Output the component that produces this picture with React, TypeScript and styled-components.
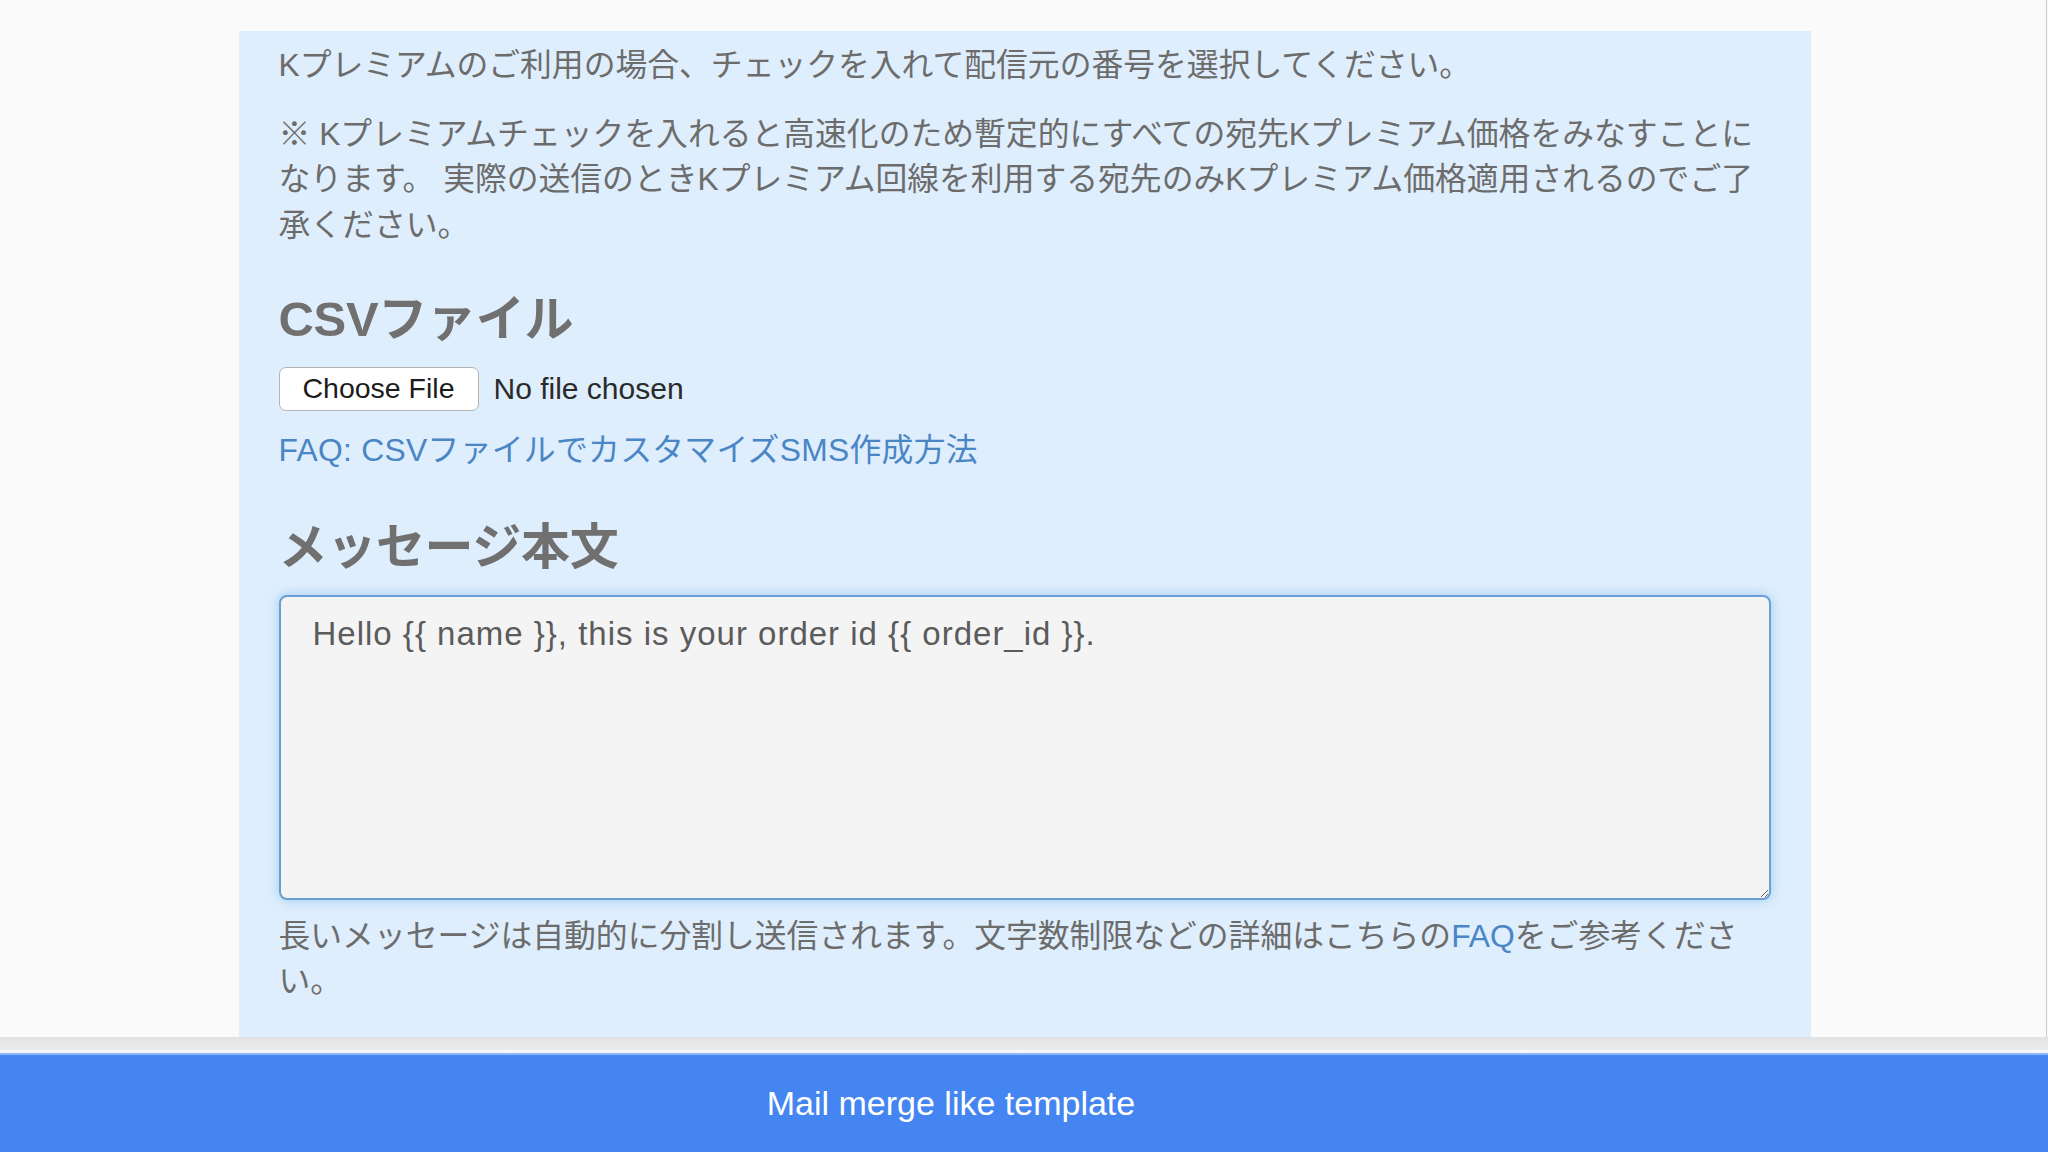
import styled, { createGlobalStyle } from 'styled-components';

const GlobalStyle = createGlobalStyle`
    html, body {
        margin: 0;
        padding: 0;
        background: #fafafa;
    }
    body {
        font-family: "Liberation Sans", "Noto Sans CJK JP", sans-serif;
        color: #6c6c6c;
    }
`

const Page = styled.div`
    height: 100vh;
    display: flex;
    flex-direction: column;
    overflow: hidden;
`

const Main = styled.main`
    flex: 1;
    min-height: 0;
    display: flex;
    flex-direction: column;
    align-items: center;
    padding: 31px 0 0 3px;
    margin-right: 1px;
    border-right: 1px solid #cbcbcb;
    overflow: hidden;
`

const Panel = styled.section`
    flex: 1;
    width: 1572px;
    box-sizing: border-box;
    padding: 12px 40px 0;
    background: #dfeefc;
`

const Text = styled.p`
    margin: 0 0 23px;
    font-size: 31.8px;
    line-height: 45.7px;
`

const Heading = styled.h3`
    margin: 44px 0 21px;
    font-size: 49px;
    line-height: 53px;
    font-weight: bold;
    color: #707070;
    letter-spacing: -0.3px;
`

const FileRow = styled.div`
    display: flex;
    align-items: center;
    gap: 15px;
    height: 44px;
`

const FileButton = styled.button`
    height: 44px;
    width: 200px;
    box-sizing: border-box;
    padding: 0;
    background: #ffffff;
    border: 1px solid #b4b4b4;
    border-radius: 7px;
    font-family: "Liberation Sans", sans-serif;
    font-size: 28.5px;
    color: #1c1c1c;
    cursor: pointer;
`

const FileStatus = styled.span`
    font-family: "Liberation Sans", sans-serif;
    font-size: 30px;
    color: #2a2a2a;
`

const Link = styled.a`
    color: #4a86c5;
    text-decoration: none;
`

const LinkLine = styled.div`
    margin: 17px 0 47px;
    font-size: 31.8px;
    line-height: 45.7px;
    letter-spacing: 0.3px;
`

const MessageBox = styled.textarea`
    display: block;
    width: 100%;
    height: 305px;
    box-sizing: border-box;
    margin: 0;
    padding: 14px 28px 14px 32px;
    background: #f4f4f4;
    border: 2px solid #6b9fd4;
    border-radius: 8px;
    box-shadow: 0 0 12px rgba(102, 175, 233, 0.55);
    outline: none;
    font-family: "Liberation Sans", sans-serif;
    font-size: 33px;
    line-height: 45.7px;
    letter-spacing: 1px;
    color: #5b5b5b;
`

const HelpText = styled(Text)`
    margin: 14px 0 0;
`

const Footer = styled.footer`
    flex: none;
    display: flex;
    flex-direction: column;
`

const Shade = styled.div`
    height: 13px;
    background: linear-gradient(#e2e2e2, #ececec);
    border-bottom: 3px solid #f8f6fa;
`

const Banner = styled.div`
    height: 99px;
    display: flex;
    align-items: center;
    justify-content: center;
    padding-right: 146px;
    background: #4585f1;
    border-top: 2px solid #8cb9f6;
    box-sizing: border-box;
    font-family: "Liberation Sans", sans-serif;
    font-size: 34px;
    color: #ffffff;
`

const App = () => {
    return (
        <Page>
            <GlobalStyle />
            <Main>
                <Panel>
                    <Text>Kプレミアムのご利用の場合、チェックを入れて配信元の番号を選択してください。</Text>
                    <Text>
                        ※ Kプレミアムチェックを入れると高速化のため暫定的にすべての宛先Kプレミアム価格をみなすことになります。 実際の送信のときKプレミアム回線を利用する宛先のみKプレミアム価格適用されるのでご了承ください。
                    </Text>

                    <Heading>CSVファイル</Heading>
                    <FileRow>
                        <FileButton type='button'>Choose File</FileButton>
                        <FileStatus>No file chosen</FileStatus>
                    </FileRow>
                    <LinkLine>
                        <Link href='#'>FAQ: CSVファイルでカスタマイズSMS作成方法</Link>
                    </LinkLine>

                    <Heading>メッセージ本文</Heading>
                    <MessageBox defaultValue='Hello {{ name }}, this is your order id {{ order_id }}.' />
                    <HelpText>
                        長いメッセージは自動的に分割し送信されます。文字数制限などの詳細はこちらの<Link href='#'>FAQ</Link>をご参考ください。
                    </HelpText>
                </Panel>
            </Main>
            <Footer>
                <Shade />
                <Banner>Mail merge like template</Banner>
            </Footer>
        </Page>
    )
}

export default App
